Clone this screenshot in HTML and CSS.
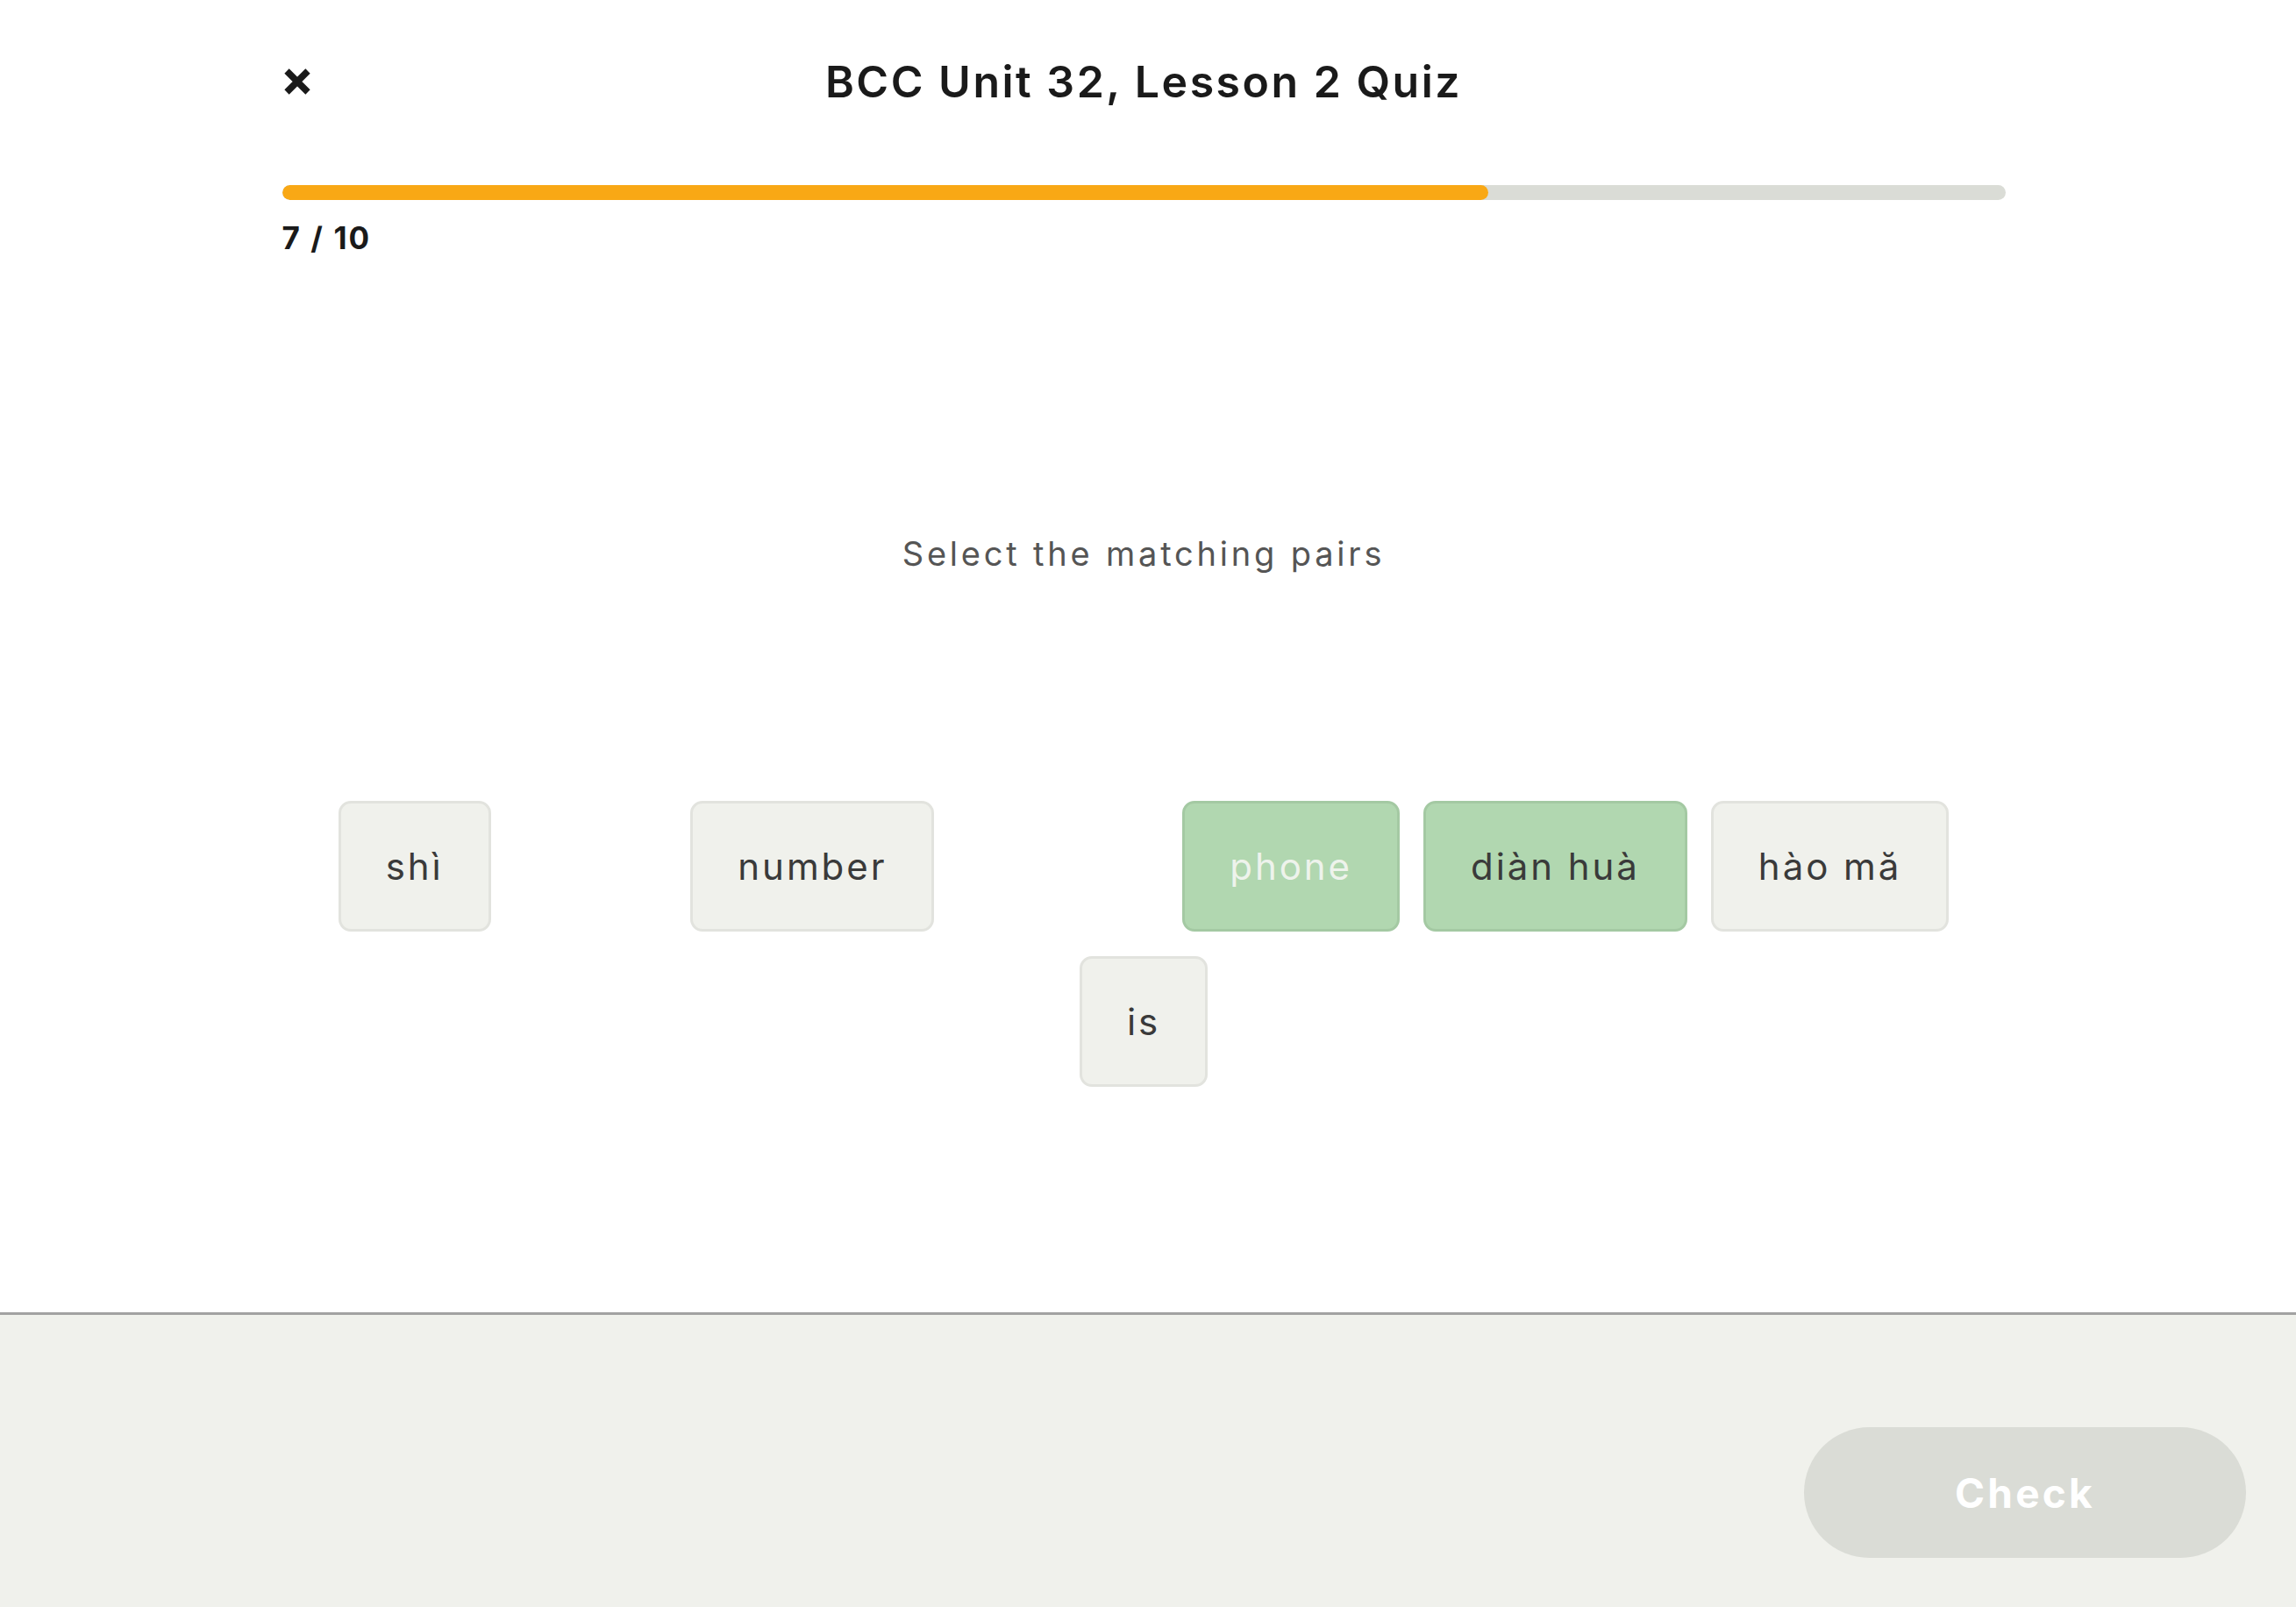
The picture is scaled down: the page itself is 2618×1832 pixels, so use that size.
FILE: index.html
```html
<!DOCTYPE html>
<html>
<head>
    <title>BCC Unit 32, Lesson 2 Quiz</title>
    <link rel="stylesheet" href="styles.css">
</head>
<body>
    <main class="quiz">
        <div class="container">
            <header class="quiz-header">
                <button class="close-btn" aria-label="Close">
                    <svg width="34" height="34" viewBox="0 0 34 34">
                        <path d="M5 5 L29 29 M29 5 L5 29" stroke="#1a1a1a" stroke-width="7.5" fill="none"/>
                    </svg>
                </button>
                <h1 class="quiz-title">BCC Unit 32, Lesson 2 Quiz</h1>
                <span></span>
            </header>

            <div class="progress">
                <div class="progress-fill" style="width: 70%"></div>
            </div>
            <p class="progress-count">7 / 10</p>

            <p class="prompt">Select the matching pairs</p>

            <!-- matched tiles stay in the flow but are hidden -->
            <div class="tiles">
                <span class="tile">shì</span>
                <span class="tile tile-done">my</span>
                <span class="tile">number</span>
                <span class="tile tile-done">wǒde</span>
                <span class="tile tile-matched">phone</span>
                <span class="tile tile-selected">diàn huà</span>
                <span class="tile">hào mă</span>
                <span class="tile">is</span>
            </div>
        </div>
    </main>

    <footer class="quiz-footer">
        <button class="check-btn" disabled>Check</button>
    </footer>
</body>
</html>
```

FILE: styles.css
```css
* {
    box-sizing: border-box;
}

html, body {
    height: 100%;
}

body {
    margin: 0;
    display: flex;
    flex-direction: column;
    background-color: #fff;
    font-family: Inter, "Noto Sans", "DejaVu Sans", sans-serif;
    color: #1a1a1a;
}

.quiz {
    flex: 1;
    padding-right: 10px;
}

.container {
    width: 1965px;
    margin: 0 auto;
}

.quiz-header {
    height: 185px;
    display: grid;
    grid-template-columns: 80px 1fr 80px;
    align-items: center;
}

.close-btn {
    width: 34px;
    height: 34px;
    padding: 0;
    border: none;
    background: none;
    display: flex;
}

.quiz-title {
    margin: 0;
    text-align: center;
    font-size: 50px;
    font-weight: 600;
    letter-spacing: 0.05em;
    color: #1a1a1a;
}

.progress {
    margin-top: 26px;
    height: 17px;
    border-radius: 9px;
    background-color: #dadcd6;
    overflow: hidden;
}

.progress-fill {
    height: 100%;
    border-radius: 9px;
    background-color: #f9a815;
}

.progress-count {
    margin: 23px 0 0;
    line-height: 40px;
    font-size: 35px;
    font-weight: 700;
    letter-spacing: 0.06em;
}

.prompt {
    margin: 315px 0 0;
    line-height: 50px;
    text-align: center;
    font-size: 38px;
    letter-spacing: 0.1em;
    color: #555;
}

.tiles {
    width: 1880px;
    margin: 257px auto 0;
    display: flex;
    flex-wrap: wrap;
    justify-content: center;
    gap: 28px 27px;
}

.tile {
    height: 149px;
    padding: 0 51px;
    display: flex;
    align-items: center;
    justify-content: center;
    border: 3px solid #e2e3de;
    border-radius: 14px;
    background-color: #f0f1ec;
    font-size: 42px;
    letter-spacing: 0.07em;
    color: #3a3a3a;
}

.tile-done {
    visibility: hidden;
}

.tile-selected,
.tile-matched {
    background-color: #b1d7b0;
    border-color: #a4c9a3;
}

.tile-matched {
    color: #eef3ec;
}

.quiz-footer {
    height: 336px;
    padding: 128px 57px 0 0;
    display: flex;
    justify-content: flex-end;
    align-items: flex-start;
    border-top: 3px solid #a2a2a2;
    background-color: #f0f1ec;
}

.check-btn {
    width: 504px;
    height: 149px;
    border: none;
    border-radius: 75px;
    background-color: #dadcd6;
    font-family: inherit;
    font-size: 46px;
    font-weight: 700;
    letter-spacing: 0.07em;
    color: #fff;
}
```
